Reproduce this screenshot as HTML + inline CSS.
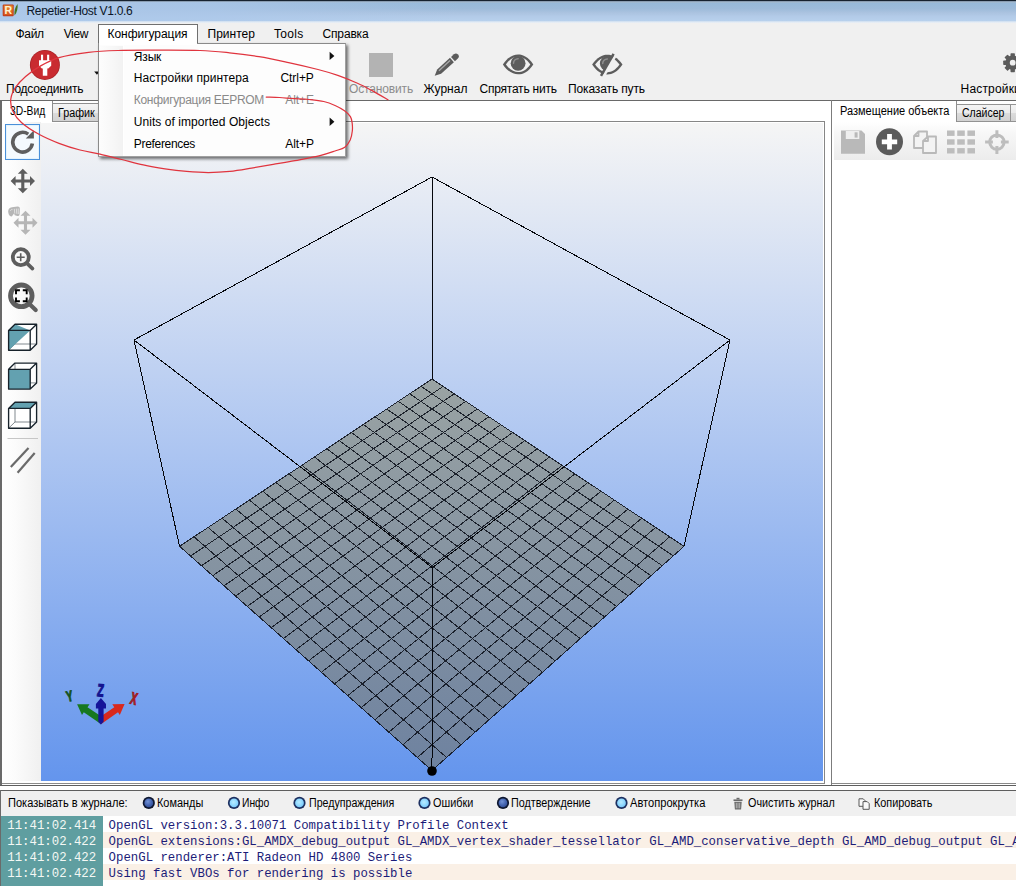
<!DOCTYPE html>
<html lang="ru"><head><meta charset="utf-8"><title>Repetier-Host V1.0.6</title>
<style>
html,body{margin:0;padding:0;width:1016px;height:886px;overflow:hidden;background:#f0f0f0;font-family:'Liberation Sans',sans-serif;}
.a{position:absolute;}
.t{position:absolute;white-space:pre;line-height:1;font-family:'Liberation Sans',sans-serif;}
svg{position:absolute;left:0;top:0;overflow:visible}

</style></head><body>
<div class="a" style="left:0px;top:0px;width:1016px;height:22px;background:linear-gradient(#a4b9cc 0,#a4b9cc 9%,#97b9d9 16%,#9dbbda 40%,#abc3e0 58%,#b3cbe8 75%,#b7d0ec 94%,#c3d8ef 100%);"></div>
<div class="a" style="left:0px;top:2px;width:460px;height:19px;background:linear-gradient(90deg,rgba(172,200,234,0.9) 0,rgba(172,200,234,0.75) 45%,rgba(172,200,234,0) 100%);"></div>
<div class="a" style="left:0px;top:0px;width:1016px;height:1px;background:#16222f;"></div>
<div class="a" style="left:0px;top:1px;width:1016px;height:1px;background:rgba(60,80,105,0.25);"></div>
<svg width="1016" height="22" viewBox="0 0 1016 22">
<defs><linearGradient id="icg" x1="0" y1="0" x2="0" y2="1"><stop offset="0" stop-color="#ea8a2c"/><stop offset="1" stop-color="#d8561c"/></linearGradient></defs>
<rect x="2.700" y="4.400" width="11" height="11.800" rx="1" fill="#bf3a1a"/>
<rect x="3.700" y="5.400" width="9" height="9.800" fill="url(#icg)"/>
<path d="M14.500 15.600 C14 11 15 7 17.600 3.900 C18 8 17 12.500 14.500 15.600Z" fill="#47751f"/>
<text x="4.500" y="14.200" font-family="Liberation Sans, sans-serif" font-weight="bold" font-size="10.500" fill="#fff3d0">R</text>
</svg>
<span class="t" style="left:26.50px;top:4.64px;font-size:12px;color:#0b1526;letter-spacing:-0.303px;">Repetier-Host V1.0.6</span>
<div class="a" style="left:0px;top:22px;width:1016px;height:22px;background:#f0f0f0;"></div>
<div class="a" style="left:0px;top:21px;width:1016px;height:2px;background:linear-gradient(#cbddf0,#eef2f6);"></div>
<span class="t" style="left:15.50px;top:27.84px;font-size:12px;color:#000;letter-spacing:-0.329px;">Файл</span>
<span class="t" style="left:63.70px;top:27.84px;font-size:12px;color:#000;letter-spacing:-0.374px;">View</span>
<span class="t" style="left:207.50px;top:27.84px;font-size:12px;color:#000;letter-spacing:0.022px;">Принтер</span>
<span class="t" style="left:274.00px;top:27.84px;font-size:12px;color:#000;letter-spacing:0.297px;">Tools</span>
<span class="t" style="left:322.50px;top:27.84px;font-size:12px;color:#000;letter-spacing:-0.154px;">Справка</span>
<div class="a" style="left:0px;top:44px;width:1016px;height:56px;background:#f0f0f0;"></div>
<svg width="1016" height="110" viewBox="0 0 1016 110">
<circle cx="44.9" cy="64.9" r="15" fill="#a82428"/>
<circle cx="44.9" cy="64.9" r="14.2" fill="#c92b30"/>
<g fill="#fff">
<rect x="41" y="54.7" width="2.100" height="6.500" />
<rect x="47.100" y="54.7" width="2.100" height="6.500" />
<path d="M39 60.300h12.200v5.400l-2.900 2.900h-1v7.100h-4.500v-7.100h-.9l-2.900-2.900z"/>
</g>
<path d="M94.2 71.5h5.5l-2.75 3.2z" fill="#111"/>
<!-- stop -->
<rect x="369" y="53" width="24" height="24" fill="#b3b3b3"/>
<!-- pencil -->
<g transform="translate(434.700,75.700) rotate(-42.300)" fill="#5c5c5c">
<path d="M0 0 L6 -2.900 L23.300 -2.900 L23.300 2.900 L6 2.900Z"/>
<path d="M24.700 -2.900 L28.600 -2.900 A2.900 2.900 0 0 1 28.600 2.900 L24.700 2.900Z"/>
<rect x="6.500" y="-1.500" width="15" height="1.300" fill="#a9a9a9"/>
</g>
<!-- eye -->
<g>
<path d="M502.90 64.40 C507.92 56.98 513.08 54.50 518.10 54.50 C523.12 54.50 528.28 56.98 533.30 64.40 C528.28 71.83 523.12 74.30 518.10 74.30 C513.08 74.30 507.92 71.83 502.90 64.40Z" fill="#5c5c5c"/>
<path d="M505.90 64.40 C509.93 58.70 514.07 56.80 518.10 56.80 C522.13 56.80 526.27 58.70 530.30 64.40 C526.27 70.10 522.13 72.00 518.10 72.00 C514.07 72.00 509.93 70.10 505.90 64.40Z" fill="#f0f0f0"/>
<circle cx="518.1" cy="63.300000000000004" r="7.400" fill="#5c5c5c"/>
<path d="M513.5 63.300000000000004 A4.600 4.600 0 0 1 518.1 58.7" stroke="#8f8f8f" stroke-width="1.500" fill="none" stroke-linecap="round"/>
</g>
<!-- eye slash -->
<g>
<clipPath id="cl"><path d="M585 45 L618.700 45 L598 81 L585 81Z"/></clipPath>
<path d="M592.10 64.60 C597.12 57.17 602.28 54.70 607.30 54.70 C612.32 54.70 617.48 57.17 622.50 64.60 C617.48 72.02 612.32 74.50 607.30 74.50 C602.28 74.50 597.12 72.02 592.10 64.60Z" fill="#5c5c5c"/>
<path d="M595.10 64.60 C599.13 58.90 603.27 57.00 607.30 57.00 C611.33 57.00 615.47 58.90 619.50 64.60 C615.47 70.30 611.33 72.20 607.30 72.20 C603.27 72.20 599.13 70.30 595.10 64.60Z" fill="#f0f0f0"/>
<circle cx="607.3" cy="63.49999999999999" r="7.400" fill="#5c5c5c" clip-path="url(#cl)"/>
<path d="M602.6999999999999 63.49999999999999 A4.600 4.600 0 0 1 607.3 58.89999999999999" stroke="#8f8f8f" stroke-width="1.500" fill="none" stroke-linecap="round"/>
<path d="M616.200 54.400 L603.200 77" stroke="#f0f0f0" stroke-width="2.600"/>
<path d="M613.600 53.800 L601 75.800" stroke="#5c5c5c" stroke-width="2.500"/>
</g>
<!-- gear -->
<g transform="translate(1012.700,62.700)" fill="#5c5c5c">
<circle r="7.300"/>
<g><rect x="-2.200" y="-9.500" width="4.400" height="19" rx="0.700"/><rect x="-2.200" y="-9.500" width="4.400" height="19" rx="0.700" transform="rotate(45)"/><rect x="-2.200" y="-9.500" width="4.400" height="19" rx="0.700" transform="rotate(90)"/><rect x="-2.200" y="-9.500" width="4.400" height="19" rx="0.700" transform="rotate(135)"/></g>
<circle r="2.900" fill="#f0f0f0"/>
</g>
</svg>
<span class="t" style="left:6.00px;top:83.34px;font-size:12px;color:#000;letter-spacing:-0.221px;">Подсоединить</span>
<span class="t" style="left:349.00px;top:83.34px;font-size:12px;color:#8c8c8c;letter-spacing:-0.150px;">Остановить</span>
<span class="t" style="left:423.50px;top:83.34px;font-size:12px;color:#000;letter-spacing:0.034px;">Журнал</span>
<span class="t" style="left:479.50px;top:83.34px;font-size:12px;color:#000;letter-spacing:-0.226px;">Спрятать нить</span>
<span class="t" style="left:568.00px;top:83.34px;font-size:12px;color:#000;letter-spacing:-0.123px;">Показать путь</span>
<span class="t" style="left:960.60px;top:83.34px;font-size:12px;color:#000;letter-spacing:0.173px;">Настройки</span>
<div class="a" style="left:0px;top:100px;width:1016px;height:690px;background:#fff;"></div>
<div class="a" style="left:0px;top:100px;width:1016px;height:1px;background:#696969;"></div>
<div class="a" style="left:0px;top:100px;width:2px;height:686px;background:#6a6a6a;"></div>
<div class="a" style="left:2px;top:121px;width:823px;height:1px;background:#868686;"></div>
<div class="a" style="left:824px;top:121px;width:1px;height:663px;background:#868686;"></div>
<div class="a" style="left:2px;top:101px;width:51px;height:21px;background:#fff;border-right:1px solid #8e8e8e;box-sizing:border-box;"></div>
<div class="a" style="left:53px;top:103px;width:60px;height:19px;background:linear-gradient(#f4f4f4,#ebebeb 50%,#dcdcdc 51%,#d2d2d2);border:1px solid #8e8e8e;border-left:none;box-sizing:border-box;"></div>
<span class="t" style="left:9.60px;top:104.94px;font-size:12px;color:#000;transform:scaleX(0.8576);transform-origin:0 0;">3D-Вид</span>
<span class="t" style="left:57.60px;top:106.64px;font-size:12px;color:#000;transform:scaleX(0.8976);transform-origin:0 0;">График</span>
<div class="a" style="left:2px;top:122px;width:39px;height:659px;background:linear-gradient(90deg,#ffffff,#fbfbfb 35%,#f0f0f0);"></div>
<div class="a" style="left:41px;top:123px;width:782px;height:658px;background:linear-gradient(#f5f5f5,#6495ed);"></div>
<svg width="1016" height="886" viewBox="0 0 1016 886">
<defs><linearGradient id="bedg" x1="0" y1="379" x2="0" y2="771" gradientUnits="userSpaceOnUse">
<stop offset="0" stop-color="#9aa3a3"/><stop offset="1" stop-color="#6e82a0"/></linearGradient></defs>
<path d="M432.0 379.0L684.0 546.3L432.0 770.5L179.6 546.3Z" fill="url(#bedg)"/>
<path d="M432.0 770.5L179.6 546.3M432.0 770.5L684.0 546.3M446.6 757.5L194.0 536.8M417.4 757.5L669.7 536.8M461.0 744.7L208.1 527.4M403.0 744.7L655.6 527.4M475.2 732.1L222.1 518.2M388.8 732.2L641.7 518.2M489.1 719.7L235.8 509.0M374.9 719.8L627.9 509.1M502.7 707.6L249.4 500.0M361.2 707.6L614.4 500.1M516.2 695.6L262.7 491.2M347.7 695.7L601.1 491.2M529.4 683.8L275.9 482.4M334.5 683.9L587.9 482.5M542.5 672.2L288.9 473.8M321.4 672.3L574.9 473.9M555.3 660.8L301.8 465.3M308.6 660.9L562.1 465.4M567.9 649.6L314.4 457.0M296.0 649.7L549.5 457.0M580.3 638.5L326.9 448.7M283.5 638.6L537.1 448.7M592.6 627.6L339.2 440.5M271.3 627.7L524.8 440.6M604.6 616.9L351.3 432.5M259.2 617.0L512.6 432.5M616.5 606.4L363.3 424.5M247.3 606.4L500.7 424.6M628.2 596.0L375.1 416.7M235.6 596.0L488.8 416.7M639.7 585.7L386.8 409.0M224.1 585.8L477.2 409.0M651.0 575.7L398.3 401.3M212.7 575.7L465.7 401.4M662.2 565.7L409.7 393.8M201.5 565.8L454.3 393.8M673.2 555.9L420.9 386.3M190.5 556.0L443.1 386.4M684.0 546.3L432.0 379.0M179.6 546.3L432.0 379.0" stroke="#0c111b" stroke-opacity="0.88" stroke-width="1" fill="none" shape-rendering="crispEdges"/>
<path d="M432.0 177.0L730.0 340.0L432.4 567.6L134.0 340.0ZM432.0 177.0L432.0 379.0M730.0 340.0L684.0 546.3M432.4 567.6L432.0 770.5M134.0 340.0L179.6 546.3" stroke="#05070c" stroke-width="1" fill="none" shape-rendering="crispEdges"/>
<circle cx="432" cy="771" r="4.8" fill="#000"/>
<g>
<path d="M101 724.200 L96.500 721 L83.800 712.300 L82 715 L77.100 704.200 L89.500 704.300 L87.500 707.200 L99.500 715.300 L101 717Z" fill="#17781f"/>
<path d="M101 724.200 L105.500 721 L118 712.300 L119.800 715 L124.600 704 L112.300 704.300 L114.300 707.200 L102.500 715.300 L101 717Z" fill="#d9281c"/>
<path d="M98.300 721.800 L98.300 708.500 L95.900 708.500 L95.900 704 L100.900 698 L106 704 L106 708.500 L103.600 708.500 L103.600 721.800 L100.900 724.400Z" fill="#15159a"/>
<text x="0" y="0" font-family="Liberation Sans, sans-serif" font-weight="bold" font-size="10" fill="#14148f" stroke="#14148f" stroke-width="0.700" transform="translate(96.700 696) rotate(6) scale(1.05 1.75)">Z</text>
<text x="0" y="0" font-family="Liberation Sans, sans-serif" font-weight="bold" font-size="9.5" fill="#14521c" stroke="#14521c" stroke-width="0.700" transform="translate(67.500 701.800) rotate(-12) scale(1.0 1.55)">Y</text>
<text x="0" y="0" font-family="Liberation Sans, sans-serif" font-weight="bold" font-size="9.5" fill="#a01e24" stroke="#a01e24" stroke-width="0.700" transform="translate(129.500 703.300) rotate(14) scale(1.0 1.75)">X</text>
</g>
</svg>
<svg width="60" height="800" viewBox="0 0 60 800">
<!-- selected rotate button -->
<rect x="5.500" y="124.5" width="34" height="35" fill="#f4fafe" stroke="#4a90d9" stroke-width="1"/>
<rect x="6.500" y="125.5" width="32" height="33" fill="none" stroke="#e3f3fd" stroke-width="1"/>
<g fill="none" stroke="#5e5e5e">
<path d="M32.35 143.570 A9.85 9.850 0 1 1 28.25 134.130" stroke-width="3.600"/>
</g>
<path d="M25.800 138.500 L33.900 130.300 L33.900 138.600 Z" fill="#5e5e5e"/>
<!-- move -->
<path d="M22.80 168.80L27.80 173.80L24.35 173.80L24.35 179.45L24.35 179.45L30.00 179.45L30.00 176.00L35.00 181.00L30.00 186.00L30.00 182.55L24.35 182.55L24.35 182.55L24.35 188.20L27.80 188.20L22.80 193.20L17.80 188.20L21.25 188.20L21.25 182.55L21.25 182.55L15.60 182.55L15.60 186.00L10.60 181.00L15.60 176.00L15.60 179.45L21.25 179.45L21.25 179.45L21.25 173.80L17.80 173.80Z" fill="#5e5e5e"/>
<!-- move object (disabled) -->
<path d="M25.50 210.80L30.50 215.80L27.05 215.80L27.05 221.25L27.05 221.25L32.50 221.25L32.50 217.80L37.50 222.80L32.50 227.80L32.50 224.35L27.05 224.35L27.05 224.35L27.05 229.80L30.50 229.80L25.50 234.80L20.50 229.80L23.95 229.80L23.95 224.35L23.95 224.35L18.50 224.35L18.50 227.80L13.50 222.80L18.50 217.80L18.50 221.25L23.95 221.25L23.95 221.25L23.95 215.80L20.50 215.80Z" fill="#b6b6b6"/>
<g fill="#b6b6b6">
<path d="M8.300 212.500 C7.800 209.500 9.500 207.500 12 207.300 L17.500 206.500 C19.300 206.400 20 207.500 19.900 209 L19.600 214.300 C19.500 215.600 18.500 216.300 17.300 216 L14.800 215.300 L14 213.600 L11.800 216.600 C10 216.600 8.600 215 8.300 212.500Z"/>
</g>
<path d="M10.500 211 C10.500 209.800 11.500 209.300 12.500 209.600M14.300 208.800 L14.800 213.500M16.300 208.600 L16.800 213.800M18.200 208.500 L18.300 214" stroke="#e9e9e9" stroke-width="0.800" fill="none"/>
<!-- zoom -->
<g fill="none" stroke="#5e5e5e" stroke-linecap="round">
<circle cx="20.8" cy="257.2" r="8" stroke-width="3.800"/>
<path d="M27.300 263.600 L32.500 268.600" stroke-width="3.600"/>
<path d="M16.700 257.200h8M20.700 253.200v8" stroke-width="1.600" stroke-linecap="butt"/>
</g>
<!-- zoom fit -->
<g fill="none" stroke="#5e5e5e" stroke-linecap="round">
<circle cx="21.300" cy="295.800" r="10.800" stroke-width="4.800"/>
<path d="M30.200 304.700 L35.700 310" stroke-width="4.200"/>
</g>
<g fill="none" stroke="#000" stroke-width="1.900">
<path d="M16 294.200v-3.900h3.900M22.800 290.300h3.900v3.900M26.700 297.400v3.900h-3.900M19.900 301.300h-3.900v-3.900"/>
</g>
<path d="M8.6 330.4L15.0 324.2L36.6 324.2L36.6 344.0L30.2 350.2L8.6 350.2Z" fill="#fff"/><path d="M15.0 324.2L15.0 344.0L36.6 344.0M15.0 344.0L8.6 350.2" stroke="#4c575e" stroke-width="0.700" fill="none"/><path d="M8.6 330.4L15.0 324.2L30.2 330.4L8.6 350.2Z" fill="#63a1b0"/><path d="M8.6 330.4L30.2 330.4L30.2 350.2L8.6 350.2ZM8.6 330.4L15.0 324.2L36.6 324.2L30.2 330.4M36.6 324.2L36.6 344.0L30.2 350.2" stroke="#17222b" stroke-width="1.350" fill="none" stroke-linejoin="round"/><path d="M8.6 369.3L15.0 363.1L36.6 363.1L36.6 382.90000000000003L30.2 389.1L8.6 389.1Z" fill="#fff"/><path d="M15.0 363.1L15.0 382.90000000000003L36.6 382.90000000000003M15.0 382.90000000000003L8.6 389.1" stroke="#4c575e" stroke-width="0.700" fill="none"/><path d="M8.6 369.3L30.2 369.3L30.2 389.1L8.6 389.1Z" fill="#63a1b0"/><path d="M8.6 369.3L30.2 369.3L30.2 389.1L8.6 389.1ZM8.6 369.3L15.0 363.1L36.6 363.1L30.2 369.3M36.6 363.1L36.6 382.90000000000003L30.2 389.1" stroke="#17222b" stroke-width="1.350" fill="none" stroke-linejoin="round"/><path d="M8.6 408.4L15.0 402.2L36.6 402.2L36.6 422.0L30.2 428.2L8.6 428.2Z" fill="#fff"/><path d="M15.0 402.2L15.0 422.0L36.6 422.0M15.0 422.0L8.6 428.2" stroke="#4c575e" stroke-width="0.700" fill="none"/><path d="M8.6 408.4L15.0 402.2L36.6 402.2L30.2 408.4Z" fill="#63a1b0"/><path d="M8.6 408.4L30.2 408.4L30.2 428.2L8.6 428.2ZM8.6 408.4L15.0 402.2L36.6 402.2L30.2 408.4M36.6 402.2L36.6 422.0L30.2 428.2" stroke="#17222b" stroke-width="1.350" fill="none" stroke-linejoin="round"/>
<!-- separator -->
<rect x="7.500" y="438" width="30.500" height="1" fill="#c6c6c6"/>
<!-- parallel lines -->
<g stroke="#6a6a6a" stroke-width="2.200" fill="none">
<path d="M10.800 467 L28.500 448"/>
<path d="M17.600 472.700 L34.700 453"/>
</g>
</svg>
<div class="a" style="left:831px;top:100px;width:1px;height:686px;background:#7c7c7c;"></div>
<div class="a" style="left:832px;top:101px;width:125px;height:22px;background:#fff;border-right:1px solid #8e8e8e;box-sizing:border-box;"></div>
<div class="a" style="left:957px;top:104px;width:54px;height:18px;background:linear-gradient(#f4f4f4,#ebebeb 50%,#dcdcdc 51%,#d2d2d2);border:1px solid #939393;border-left:none;box-sizing:border-box;"></div>
<div class="a" style="left:1011px;top:104px;width:10px;height:18px;background:linear-gradient(#f4f4f4,#ebebeb 50%,#dcdcdc 51%,#d2d2d2);border:1px solid #939393;border-left:none;box-sizing:border-box;"></div>
<span class="t" style="left:839.60px;top:104.84px;font-size:12px;color:#000;transform:scaleX(0.9180);transform-origin:0 0;">Размещение объекта</span>
<span class="t" style="left:961.70px;top:107.14px;font-size:12px;color:#000;transform:scaleX(0.8739);transform-origin:0 0;">Слайсер</span>
<div class="a" style="left:834px;top:122px;width:190px;height:38px;background:linear-gradient(#ffffff,#f7f7f7 30%,#ececec);"></div>
<svg width="1016" height="200" viewBox="0 0 1016 200">
<!-- save -->
<g fill="#b9b9b9">
<path d="M841 130.500h20.500l3.500 3.500v19.800h-24z"/>
</g>
<rect x="845.800" y="131" width="13.500" height="8" fill="#efefef"/>
<rect x="854.600" y="132.300" width="3" height="5.300" fill="#b9b9b9"/>
<!-- plus -->
<circle cx="889.500" cy="141.800" r="13.500" fill="#5b5b5b"/>
<path d="M881.800 141.800h15.400M889.500 134.100v15.400" stroke="#fff" stroke-width="4.800" fill="none"/>
<!-- copy -->
<g fill="#f3f3f3" stroke="#b9b9b9" stroke-width="1.800" stroke-linejoin="round">
<path d="M918.500 131.500h8.500v16.500h-13v-12zM918.500 131.500v4.500h-4.500"/>
<path d="M928 136.500h8v16.500h-13v-12zM928 136.500v4.500h-5"/>
</g>
<!-- grid -->
<g fill="#bdbdbd">
<rect x="947" y="130.500" width="7.600" height="5.400"/><rect x="957.200" y="130.500" width="7.600" height="5.400"/><rect x="967.400" y="130.500" width="7.600" height="5.400"/>
<rect x="947" y="139.300" width="7.600" height="5.400"/><rect x="957.200" y="139.300" width="7.600" height="5.400"/><rect x="967.400" y="139.300" width="7.600" height="5.400"/>
<rect x="947" y="148.100" width="7.600" height="5.400"/><rect x="957.200" y="148.100" width="7.600" height="5.400"/><rect x="967.400" y="148.100" width="7.600" height="5.400"/>
</g>
<!-- crosshair -->
<g fill="none" stroke="#bdbdbd">
<circle cx="996.900" cy="142.100" r="7.200" stroke-width="3"/>
<path d="M996.900 130.300v7.800M996.900 146.100v7.800M985.100 142.100h7.800M1000.900 142.100h7.800" stroke-width="3"/>
</g>
</svg>
<div class="a" style="left:2px;top:783px;width:823px;height:1px;background:#8a8a8a;"></div>
<div class="a" style="left:832px;top:783px;width:190px;height:1px;background:#8a8a8a;"></div>
<div class="a" style="left:0px;top:785px;width:1016px;height:1px;background:#5e5e5e;"></div>
<div class="a" style="left:0px;top:786px;width:1016px;height:4px;background:#fff;"></div>
<div class="a" style="left:0px;top:790px;width:1016px;height:1px;background:#5e5e5e;"></div>
<div class="a" style="left:0px;top:791px;width:1016px;height:95px;background:#f0f0f0;"></div>
<div class="a" style="left:0px;top:790px;width:1px;height:96px;background:#6a6a6a;"></div>
<div class="a" style="left:1px;top:816px;width:1016px;height:70px;background:#fff;"></div>
<div class="a" style="left:2px;top:832px;width:1016px;height:16px;background:#faf0e6;"></div>
<div class="a" style="left:2px;top:864px;width:1016px;height:16px;background:#faf0e6;"></div>
<div class="a" style="left:1px;top:816px;width:102px;height:70px;background:#5f9ea0;"></div>
<span class="t" style="left:7.30px;top:819.73px;font-size:12.35px;color:#f4f8f4;font-family:'Liberation Mono',monospace;">11:41:02.414</span>
<span class="t" style="left:108.60px;top:819.73px;font-size:12.35px;color:#1c1c78;font-family:'Liberation Mono',monospace;">OpenGL version:3.3.10071 Compatibility Profile Context</span>
<span class="t" style="left:7.30px;top:835.73px;font-size:12.35px;color:#f4f8f4;font-family:'Liberation Mono',monospace;">11:41:02.422</span>
<span class="t" style="left:108.60px;top:835.73px;font-size:12.35px;color:#1c1c78;font-family:'Liberation Mono',monospace;">OpenGL extensions:GL_AMDX_debug_output GL_AMDX_vertex_shader_tessellator GL_AMD_conservative_depth GL_AMD_debug_output GL_AMD_depth_clamp_separate GL_AMD_draw_buffers_blend</span>
<span class="t" style="left:7.30px;top:851.73px;font-size:12.35px;color:#f4f8f4;font-family:'Liberation Mono',monospace;">11:41:02.422</span>
<span class="t" style="left:108.60px;top:851.73px;font-size:12.35px;color:#1c1c78;font-family:'Liberation Mono',monospace;">OpenGL renderer:ATI Radeon HD 4800 Series</span>
<span class="t" style="left:7.30px;top:867.73px;font-size:12.35px;color:#f4f8f4;font-family:'Liberation Mono',monospace;">11:41:02.422</span>
<span class="t" style="left:108.60px;top:867.73px;font-size:12.35px;color:#1c1c78;font-family:'Liberation Mono',monospace;">Using fast VBOs for rendering is possible</span>
<span class="t" style="left:7.60px;top:796.74px;font-size:12px;color:#000;transform:scaleX(0.9204);transform-origin:0 0;">Показывать в журнале:</span>
<span class="t" style="left:157.40px;top:796.74px;font-size:12px;color:#000;transform:scaleX(0.9106);transform-origin:0 0;">Команды</span>
<span class="t" style="left:242.00px;top:796.74px;font-size:12px;color:#000;transform:scaleX(0.8582);transform-origin:0 0;">Инфо</span>
<span class="t" style="left:308.50px;top:796.74px;font-size:12px;color:#000;transform:scaleX(0.8866);transform-origin:0 0;">Предупраждения</span>
<span class="t" style="left:432.50px;top:796.74px;font-size:12px;color:#000;transform:scaleX(0.9034);transform-origin:0 0;">Ошибки</span>
<span class="t" style="left:511.40px;top:796.74px;font-size:12px;color:#000;transform:scaleX(0.8961);transform-origin:0 0;">Подтверждение</span>
<span class="t" style="left:629.80px;top:796.74px;font-size:12px;color:#000;transform:scaleX(0.9255);transform-origin:0 0;">Автопрокрутка</span>
<span class="t" style="left:747.50px;top:796.74px;font-size:12px;color:#000;transform:scaleX(0.8977);transform-origin:0 0;">Очистить журнал</span>
<span class="t" style="left:874.30px;top:796.74px;font-size:12px;color:#000;transform:scaleX(0.9052);transform-origin:0 0;">Копировать</span>
<svg width="1016" height="886" viewBox="0 0 1016 886"><defs>
<radialGradient id="ron" cx="0.4" cy="0.35" r="0.8"><stop offset="0" stop-color="#7292d6"/><stop offset="0.5" stop-color="#4666b2"/><stop offset="1" stop-color="#26428a"/></radialGradient>
<radialGradient id="roff" cx="0.45" cy="0.42" r="0.8"><stop offset="0" stop-color="#b8ecff"/><stop offset="0.5" stop-color="#8cd6ff"/><stop offset="1" stop-color="#64b8f2"/></radialGradient>
</defs><circle cx="148.8" cy="802.9" r="6.100" fill="#0e1730"/><circle cx="148.8" cy="802.9" r="4.400" fill="url(#ron)"/><circle cx="234" cy="802.9" r="6.100" fill="#1d3060"/><circle cx="234" cy="802.9" r="4.400" fill="url(#roff)"/><circle cx="299.5" cy="802.9" r="6.100" fill="#1d3060"/><circle cx="299.5" cy="802.9" r="4.400" fill="url(#roff)"/><circle cx="424.5" cy="802.9" r="6.100" fill="#1d3060"/><circle cx="424.5" cy="802.9" r="4.400" fill="url(#roff)"/><circle cx="503" cy="802.9" r="6.100" fill="#0e1730"/><circle cx="503" cy="802.9" r="4.400" fill="url(#ron)"/><circle cx="621.5" cy="802.9" r="6.100" fill="#1d3060"/><circle cx="621.5" cy="802.9" r="4.400" fill="url(#roff)"/></svg>
<svg width="1016" height="886" viewBox="0 -0.8 1016 886">
<g fill="#6a6a6a">
<rect x="733.500" y="798.600" width="9" height="1.600"/><rect x="736.500" y="797" width="3" height="1.600"/>
<path d="M734.300 801h7.400l-.6 7.800h-6.200z"/>
</g>
<path d="M736.300 802v5.500M738 802v5.500M739.700 802v5.500" stroke="#d8d8d8" stroke-width="0.700"/>
<g fill="#fafafa" stroke="#585858" stroke-width="1">
<path d="M859 798h4.200l2 2v5.500h-6.200z"/>
<path d="M863 800.800h4.200l2 2v5.700h-6.200z"/>
</g>
</svg>
<div class="a" style="left:98px;top:24px;width:100px;height:21px;background:#fff;border:1px solid #707070;border-bottom:none;box-sizing:border-box;"></div>
<div class="a" style="left:98px;top:43px;width:248px;height:114px;background:#fdfdfd;border:1px solid #8a8a8a;border-right-color:#a0a0a0;border-bottom-color:#a0a0a0;box-sizing:border-box;box-shadow:2px 2px 3px rgba(0,0,0,0.55);"></div>
<div class="a" style="left:99px;top:46px;width:24px;height:110px;background:linear-gradient(90deg,#fdfdfd,#f7f7f7 60%,#f2f2f2);"></div>
<div class="a" style="left:123px;top:44px;width:1px;height:112px;background:#fff;"></div>
<div class="a" style="left:99px;top:44px;width:98px;height:1px;background:#fff;"></div>
<div class="a" style="left:99px;top:25px;width:98px;height:20px;background:#fff;"></div>
<span class="t" style="left:107.50px;top:27.84px;font-size:12px;color:#000;letter-spacing:-0.044px;">Конфигурация</span>
<span class="t" style="left:133.80px;top:50.64px;font-size:12px;color:#000;letter-spacing:-0.162px;">Язык</span>
<span class="t" style="left:133.80px;top:71.84px;font-size:12px;color:#000;letter-spacing:0.041px;">Настройки принтера</span>
<span class="t" style="left:133.80px;top:93.84px;font-size:12px;color:#8a8a8a;letter-spacing:-0.299px;">Конфигурация EEPROM</span>
<span class="t" style="left:133.80px;top:115.84px;font-size:12px;color:#000;letter-spacing:0.059px;">Units of imported Objects</span>
<span class="t" style="left:133.80px;top:137.84px;font-size:12px;color:#000;letter-spacing:-0.318px;">Preferences</span>
<span class="t" style="left:280.50px;top:71.84px;font-size:12px;color:#000;letter-spacing:-0.065px;">Ctrl+P</span>
<span class="t" style="left:285.30px;top:93.84px;font-size:12px;color:#8a8a8a;letter-spacing:-0.103px;">Alt+E</span>
<span class="t" style="left:285.30px;top:137.84px;font-size:12px;color:#000;letter-spacing:-0.103px;">Alt+P</span>
<svg width="1016" height="886" viewBox="0 0 1016 886">
<path d="M329.600 51.700l4.800 4.200l-4.800 4.200z" fill="#111"/>
<path d="M329.600 117.500l4.800 4.200l-4.800 4.200z" fill="#111"/>
<path d="M388.0 99.8C385.4 98.3 377.6 93.7 372.5 90.9C367.4 88.2 363.3 85.9 357.5 83.3C351.7 80.7 344.4 77.7 337.8 75.4C331.2 73.1 326.2 71.6 318.0 69.5C309.8 67.4 298.4 64.7 288.6 62.6C278.8 60.5 268.9 58.3 259.0 56.7C249.2 55.1 239.3 53.8 229.5 52.8C219.7 51.8 212.0 50.9 200.0 50.5C188.0 50.1 171.2 50.2 157.5 50.2C143.8 50.2 129.5 50.1 118.0 50.5C106.5 50.9 98.4 51.2 88.6 52.4C78.8 53.6 67.2 55.3 59.0 57.7C50.8 60.1 45.0 63.5 39.4 66.6C33.8 69.7 29.6 73.0 25.6 76.4C21.7 79.8 18.2 83.4 15.7 87.2C13.2 91.0 11.3 95.0 10.8 99.0C10.3 103.0 11.0 107.0 12.8 110.9C14.6 114.9 17.3 118.8 21.7 122.7C26.1 126.6 33.2 131.1 39.4 134.5C45.6 137.9 52.2 140.7 59.0 143.3C65.8 145.9 73.2 148.2 80.0 150.0C86.8 151.8 93.0 152.5 100.0 154.1C107.0 155.7 114.5 157.7 121.7 159.5C128.9 161.3 136.1 163.3 143.3 164.9C150.5 166.5 157.8 167.7 165.0 168.8C172.2 169.9 179.4 170.8 186.6 171.4C193.8 172.0 201.1 172.5 208.3 172.5C215.5 172.5 222.7 172.1 229.9 171.4C237.1 170.7 244.4 169.3 251.6 168.1C258.8 166.9 266.0 165.6 273.2 164.3C280.4 163.1 287.1 162.1 294.9 160.6C302.7 159.1 313.3 157.2 320.0 155.6C326.7 154.0 330.9 152.4 335.0 151.0C339.1 149.6 342.3 149.0 344.8 147.2C347.3 145.4 348.9 142.7 350.2 140.0C351.4 137.3 352.0 133.8 352.3 131.0C352.6 128.2 352.5 125.8 352.2 123.4C351.9 121.0 351.7 118.8 350.4 116.7C349.1 114.6 347.0 112.6 344.5 110.8C342.0 109.0 339.1 107.2 335.6 105.7C332.2 104.2 328.2 102.5 323.8 101.5C319.4 100.5 314.0 100.0 309.1 99.5C304.2 99.0 299.2 98.9 294.3 98.6C289.4 98.3 284.2 97.8 279.5 97.5C274.8 97.2 268.4 97.2 266.2 97.1" stroke="#e0343e" stroke-width="1.250" fill="none" stroke-linecap="round"/>
</svg>
</body></html>
